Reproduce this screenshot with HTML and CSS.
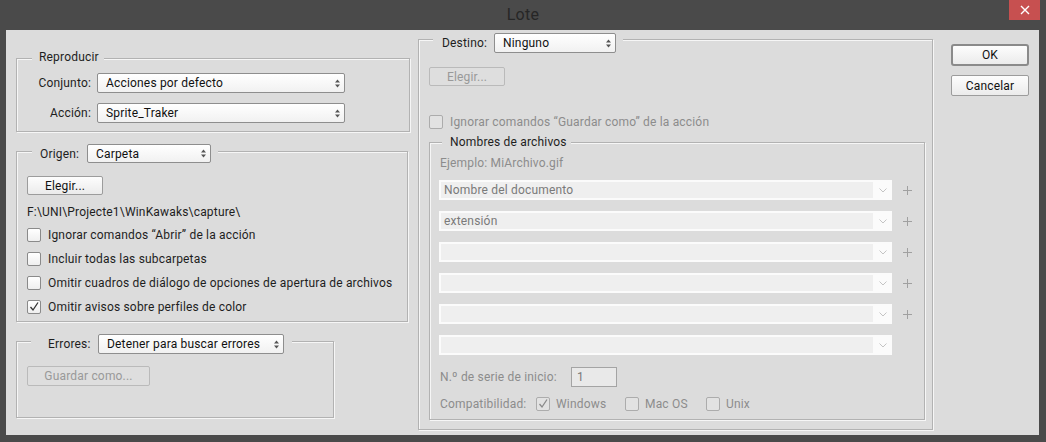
FILE: index.html
```html
<!DOCTYPE html>
<html lang="es">
<head>
<meta charset="utf-8">
<title>Lote</title>
<link rel="stylesheet" href="styles.css">
</head>
<body>
<div class="titlebar">
  <span class="title">Lote</span>
  <div class="close"><svg width="10" height="10" viewBox="0 0 10 10"><path d="M1 1 L9 9 M9 1 L1 9" stroke="#fff" stroke-width="1.4"/></svg></div>
</div>
<div class="dialog">
  <div class="col-left">
    <div class="group g-rep">
      <div class="ghead h-rep"><span>Reproducir</span></div>
      <div class="frow first"><span class="flabel">Conjunto:</span><div class="select w-rep"><span>Acciones por defecto</span><svg class="arr" width="5" height="9" viewBox="0 0 5 9"><path d="M0 3.5 L2.5 0.5 L5 3.5Z M0 5.5 L2.5 8.5 L5 5.5Z" fill="#555"/></svg></div></div>
      <div class="frow"><span class="flabel">Acción:</span><div class="select w-rep"><span>Sprite_Traker</span><svg class="arr" width="5" height="9" viewBox="0 0 5 9"><path d="M0 3.5 L2.5 0.5 L5 3.5Z M0 5.5 L2.5 8.5 L5 5.5Z" fill="#555"/></svg></div></div>
    </div>

    <div class="group g-ori">
      <div class="ghead h-ori"><span class="hl l-ori">Origen:</span><div class="select s19 w-ori"><span>Carpeta</span><svg class="arr" width="5" height="9" viewBox="0 0 5 9"><path d="M0 3.5 L2.5 0.5 L5 3.5Z M0 5.5 L2.5 8.5 L5 5.5Z" fill="#555"/></svg></div></div>
      <div class="btn b-eleg">Elegir...</div>
      <div class="path">F:\UNI\Projecte1\WinKawaks\capture\</div>
      <div class="checks">
        <div class="check"><span class="box"></span><span>Ignorar comandos “Abrir” de la acción</span></div>
        <div class="check"><span class="box"></span><span>Incluir todas las subcarpetas</span></div>
        <div class="check"><span class="box"></span><span>Omitir cuadros de diálogo de opciones de apertura de archivos</span></div>
        <div class="check"><span class="box"><svg width="12" height="12" viewBox="0 0 12 12"><path d="M2.5 6 L5 9 L10 1.5" stroke="#333" stroke-width="1.3" fill="none"/></svg></span><span>Omitir avisos sobre perfiles de color</span></div>
      </div>
    </div>

    <div class="group g-err">
      <div class="ghead h-err"><span class="hl l-err">Errores:</span><div class="select w-err"><span>Detener para buscar errores</span><svg class="arr" width="5" height="9" viewBox="0 0 5 9"><path d="M0 3.5 L2.5 0.5 L5 3.5Z M0 5.5 L2.5 8.5 L5 5.5Z" fill="#555"/></svg></div></div>
      <div class="btn disabled b-guard">Guardar como...</div>
    </div>
  </div>

  <div class="col-mid">
    <div class="group g-dest">
      <div class="ghead h-dest"><span class="hl l-dest">Destino:</span><div class="select w-dest"><span>Ninguno</span><svg class="arr" width="5" height="9" viewBox="0 0 5 9"><path d="M0 3.5 L2.5 0.5 L5 3.5Z M0 5.5 L2.5 8.5 L5 5.5Z" fill="#555"/></svg></div></div>
      <div class="btn disabled b-eleg2">Elegir...</div>
      <div class="check dis c-guard"><span class="box"></span><span>Ignorar comandos “Guardar como” de la acción</span></div>

      <div class="group g-names">
        <div class="ghead h-names"><span>Nombres de archivos</span></div>
        <div class="example">Ejemplo: MiArchivo.gif</div>
        <div class="namerows">
          <div class="namerow"><div class="combo"><div class="field">Nombre del documento</div><div class="chev"><svg width="8" height="5" viewBox="0 0 8 5"><path d="M0.5 0.5 L4 4 L7.5 0.5" stroke="#c4c4c4" fill="none"/></svg></div></div><div class="plus"><svg width="9" height="9" viewBox="0 0 9 9"><path d="M4.5 0 V9 M0 4.5 H9" stroke="#a0a0a0"/></svg></div></div>
          <div class="namerow"><div class="combo"><div class="field">extensión</div><div class="chev"><svg width="8" height="5" viewBox="0 0 8 5"><path d="M0.5 0.5 L4 4 L7.5 0.5" stroke="#c4c4c4" fill="none"/></svg></div></div><div class="plus"><svg width="9" height="9" viewBox="0 0 9 9"><path d="M4.5 0 V9 M0 4.5 H9" stroke="#a0a0a0"/></svg></div></div>
          <div class="namerow"><div class="combo"><div class="field"></div><div class="chev"><svg width="8" height="5" viewBox="0 0 8 5"><path d="M0.5 0.5 L4 4 L7.5 0.5" stroke="#c4c4c4" fill="none"/></svg></div></div><div class="plus"><svg width="9" height="9" viewBox="0 0 9 9"><path d="M4.5 0 V9 M0 4.5 H9" stroke="#a0a0a0"/></svg></div></div>
          <div class="namerow"><div class="combo"><div class="field"></div><div class="chev"><svg width="8" height="5" viewBox="0 0 8 5"><path d="M0.5 0.5 L4 4 L7.5 0.5" stroke="#c4c4c4" fill="none"/></svg></div></div><div class="plus"><svg width="9" height="9" viewBox="0 0 9 9"><path d="M4.5 0 V9 M0 4.5 H9" stroke="#a0a0a0"/></svg></div></div>
          <div class="namerow"><div class="combo"><div class="field"></div><div class="chev"><svg width="8" height="5" viewBox="0 0 8 5"><path d="M0.5 0.5 L4 4 L7.5 0.5" stroke="#c4c4c4" fill="none"/></svg></div></div><div class="plus"><svg width="9" height="9" viewBox="0 0 9 9"><path d="M4.5 0 V9 M0 4.5 H9" stroke="#a0a0a0"/></svg></div></div>
          <div class="namerow"><div class="combo"><div class="field"></div><div class="chev"><svg width="8" height="5" viewBox="0 0 8 5"><path d="M0.5 0.5 L4 4 L7.5 0.5" stroke="#c4c4c4" fill="none"/></svg></div></div></div>
        </div>
        <div class="serie"><span class="serie-l">N.º de serie de inicio:</span><div class="input">1</div></div>
        <div class="compat">
          <span class="compat-l">Compatibilidad:</span>
          <div class="check dis c-win"><span class="box"><svg width="12" height="12" viewBox="0 0 12 12"><path d="M2.5 6 L5 9 L10 1.5" stroke="#8a8a8a" stroke-width="1.3" fill="none"/></svg></span><span>Windows</span></div>
          <div class="check dis c-mac"><span class="box"></span><span>Mac OS</span></div>
          <div class="check dis"><span class="box"></span><span>Unix</span></div>
        </div>
      </div>
    </div>
  </div>

  <div class="col-right">
    <div class="btn b-ok">OK</div>
    <div class="btn b-cancel">Cancelar</div>
  </div>
</div>
</body>
</html>
```

FILE: styles.css
```css
html, body {
  margin: 0;
  padding: 0;
}
body {
  width: 1046px;
  height: 442px;
  background: #4a4a4a;
  font-family: Roboto, "Liberation Sans", sans-serif;
  font-size: 12px;
  line-height: 16px;
  letter-spacing: 0.18px;
  color: #1e1e1e;
  overflow: hidden;
}
.titlebar {
  height: 30px;
  display: grid;
  grid-template-columns: 1fr auto 1fr;
}
.title {
  grid-column: 2;
  font-size: 16px;
  line-height: 30px;
  letter-spacing: 0.3px;
  color: #262626;
}
.close {
  grid-column: 3;
  justify-self: end;
  margin-right: 6px;
  width: 31px;
  height: 20px;
  background: #c75050;
  display: flex;
  align-items: center;
  justify-content: center;
}
.dialog {
  margin: 0 7px 0 6px;
  height: 405px;
  box-sizing: border-box;
  background: #dcdcdc;
  display: flex;
  align-items: flex-start;
  padding: 3px 10px 0 10px;
}
.col-left {
  margin-top: 25px;
  display: flex;
  flex-direction: column;
}
.col-mid {
  margin-top: 6px;
  margin-left: 8px;
  width: 515px;
}
.col-right {
  margin-top: 11px;
  margin-left: 18px;
  width: 78px;
  display: flex;
  flex-direction: column;
}
.group {
  box-sizing: border-box;
  border: 1px solid #b2b2b2;
  box-shadow: inset 1px 1px 0 #f6f6f6, 1px 1px 0 #f6f6f6;
}
.ghead {
  width: fit-content;
  display: flex;
  align-items: center;
  background: #dcdcdc;
}
.hl { margin-right: 6px; }
.l-ori { width: 41px; }
.l-err { width: 44px; }
.l-dest { width: 46px; }
.g-rep { width: 394px; padding: 0 0 8px 10px; }
.h-rep { margin: -10px 0 0 5px; padding: 0 5px 0 7px; height: 16px; }
.g-ori { width: 392px; margin-top: 19px; padding: 0 0 6px 10px; }
.h-ori { margin: -8px 0 0 5px; padding: 0 7px 0 8px; }
.g-err { width: 318px; margin-top: 19px; padding: 0 0 31px 10px; }
.h-err { margin: -8px 0 0 4px; padding: 0 8px 0 17px; }
.g-dest { width: 515px; padding: 0 7px 9px 10px; }
.h-dest { margin: -7px 0 0 4px; padding: 0 7px 0 9px; }
.g-names { margin-top: 12px; padding: 0 0 7px 9px; }
.h-names { margin: -9px 0 0 3px; padding: 0 4px 0 8px; height: 16px; }

.frow {
  display: flex;
  align-items: center;
  gap: 6px;
  margin-top: 10px;
}
.frow.first { margin-top: 8px; }
.flabel { width: 64px; text-align: right; }

.select {
  box-sizing: border-box;
  height: 20px;
  border: 1px solid #8e8e8e;
  border-radius: 2px;
  background: linear-gradient(#ffffff, #f1f1f1);
  display: flex;
  align-items: center;
  justify-content: space-between;
  padding: 0 4px 0 8px;
  color: #111;
  white-space: nowrap;
}
.select.s19 { height: 19px; }
.w-rep { width: 248px; }
.w-ori { width: 124px; }
.w-err { width: 186px; }
.w-dest { width: 122px; }

.btn {
  box-sizing: border-box;
  border: 1px solid #9c9c9c;
  border-radius: 2px;
  background: linear-gradient(#fdfdfd, #ebebeb);
  display: flex;
  align-items: center;
  justify-content: center;
  color: #111;
}
.btn.disabled {
  border-color: #bababa;
  background: #dedede;
  color: #999;
}
.b-eleg { width: 76px; height: 19px; margin-top: 13px; }
.b-guard { width: 123px; height: 20px; margin-top: 12px; }
.b-eleg2 { width: 76px; height: 19px; margin-top: 14px; }
.b-ok {
  height: 22px;
  border: 2px solid #8a8a8a;
  border-radius: 3px;
}
.b-cancel { height: 21px; margin-top: 9px; }

.path { margin-top: 9px; }
.checks {
  margin-top: 7px;
  display: flex;
  flex-direction: column;
  gap: 8px;
}
.check {
  display: flex;
  align-items: center;
  gap: 7px;
  height: 16px;
  white-space: nowrap;
}
.box {
  box-sizing: border-box;
  flex: none;
  width: 14px;
  height: 14px;
  border: 1px solid #8a8a8a;
  border-radius: 2px;
  background: linear-gradient(#ffffff, #efefef);
  display: flex;
  align-items: center;
  justify-content: center;
}
.check.dis { color: #8c8c8c; }
.check.dis .box {
  border-color: #acacac;
  background: #e2e2e2;
}
.c-guard { margin-top: 28px; }

.example {
  margin-top: 5px;
  padding-left: 1px;
  color: #8c8c8c;
}
.namerows {
  margin-top: 9px;
  display: flex;
  flex-direction: column;
  gap: 11px;
}
.namerow {
  display: flex;
  align-items: center;
  height: 20px;
}
.combo {
  box-sizing: border-box;
  width: 453px;
  height: 20px;
  background: #fbfbfb;
  padding: 2px 0 2px 2px;
  display: flex;
}
.field {
  flex: 1;
  background: #efefef;
  color: #7a7a7a;
  padding-left: 3px;
  line-height: 16px;
}
.chev {
  width: 19px;
  display: flex;
  align-items: center;
  justify-content: center;
}
.plus {
  width: 16px;
  margin-left: 7px;
  display: flex;
  align-items: center;
  justify-content: center;
}
.serie {
  margin-top: 12px;
  height: 20px;
  display: flex;
  align-items: center;
  padding-left: 1px;
  color: #8c8c8c;
}
.serie-l { width: 125px; margin-right: 6px; white-space: nowrap; }
.input {
  box-sizing: border-box;
  width: 46px;
  height: 20px;
  border: 1px solid #a4a4a4;
  background: #e9e9e9;
  padding-left: 5px;
  line-height: 18px;
  color: #7a7a7a;
}
.compat {
  margin-top: 9px;
  height: 16px;
  display: flex;
  align-items: center;
  padding-left: 1px;
  color: #8c8c8c;
}
.compat-l { width: 88px; margin-right: 8px; white-space: nowrap; }
.compat .check { gap: 6px; }
.c-win { width: 89px; }
.c-mac { width: 81px; }
```
